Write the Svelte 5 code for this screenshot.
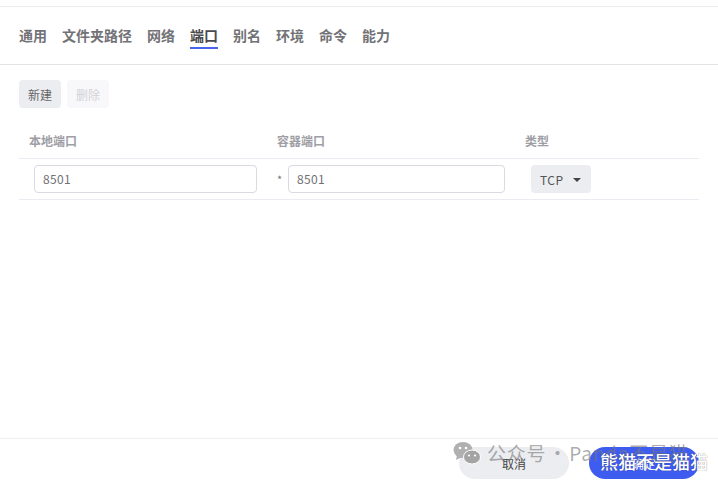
<script>
  const tabs = ['通用', '文件夹路径', '网络', '端口', '别名', '环境', '命令', '能力'];
</script>

<div class="page">
  <nav class="tabs">
    {#each tabs as t}
      <span class="tab" class:active={t === '端口'}>{t}</span>
    {/each}
  </nav>
  <main class="body">
    <div class="actions">
      <button class="btn">新建</button>
      <button class="btn off">删除</button>
    </div>
    <div class="row head">
      <div class="c1">本地端口</div>
      <div class="c2">容器端口</div>
      <div class="c3">类型</div>
    </div>
    <div class="row data">
      <div class="c1"><div class="input">8501</div></div>
      <div class="c2"><span class="star">*</span><div class="input">8501</div></div>
      <div class="c3">
        <div class="select">TCP
          <svg width="8" height="4" viewBox="0 0 8 4"><path d="M0 0h8L4 4z" fill="#444"/></svg>
        </div>
      </div>
    </div>
  </main>
  <footer class="foot">
    <button class="pill cancel">取消</button>
    <button class="pill ok">确定</button>
    <div class="mark">
      <svg width="28" height="24" viewBox="0 0 28 24">
        <ellipse cx="10" cy="9" rx="9.500" ry="8" fill="#b0b0b0"/>
        <path d="M4 14l-1 5 6-3z" fill="#b0b0b0"/>
        <ellipse cx="19" cy="16" rx="8.500" ry="7" fill="#a4a4a4" stroke="#fff" stroke-width="1"/>
        <circle cx="7" cy="7" r="1.300" fill="#fff"/><circle cx="13" cy="7" r="1.300" fill="#fff"/>
        <circle cx="16" cy="14.500" r="1.100" fill="#fff"/><circle cx="22" cy="14.500" r="1.100" fill="#fff"/>
      </svg>
      <span class="mtext">公众号 · Panda不是猫</span>
    </div>
    <div class="name">熊猫不是猫猫</div>
  </footer>
</div>

<style>
  :global(body) { margin: 0; background: #fff; }
  .page {
    width: 718px; height: 483px; position: relative; overflow: hidden;
    display: flex; flex-direction: column; box-sizing: border-box;
    padding-top: 6px;
    font-family: "Noto Sans CJK SC", "Noto Sans", sans-serif;
    color: #333;
  }
  .tabs {
    display: flex; gap: 15px; height: 59px; box-sizing: border-box;
    padding: 16px 19px 0;
    border-top: 1px solid #ebebed; border-bottom: 1px solid #e3e3e6;
    font-size: 14px; font-weight: 700; color: #727276;
  }
  .tab { height: 26px; line-height: 24px; box-sizing: border-box; }
  .active { color: #4a4a4e; border-bottom: 2px solid #4a63ee; }
  .body { flex: 1; padding: 15px 19px 0; }
  .actions { display: flex; gap: 6px; }
  .btn {
    width: 42px; height: 28px; border: 0; border-radius: 4px; padding: 0;
    background: #ecedf1; color: #666; font: inherit; font-size: 12px;
  }
  .off { background: #f8f8fa; color: #d2d2d7; }
  .row { display: flex; width: 680px; box-sizing: border-box; border-bottom: 1px solid #ebecf2; }
  .head { height: 36px; margin-top: 15px; align-items: center; font-size: 12px; font-weight: 700; color: #9e9ea4; }
  .head .c1 { padding-left: 10px; }
  .data { height: 41px; align-items: center; }
  .c1 { width: 258px; box-sizing: border-box; }
  .c2 { width: 248px; box-sizing: border-box; display: flex; align-items: center; }
  .data .c1 { padding: 0 20px 0 15px; }
  .data .c2 { padding-right: 20px; }
  .data .c3 { padding-left: 6px; }
  .star { width: 11px; font-size: 11px; color: #777; flex: none; }
  .input {
    flex: 1; height: 28px; line-height: 26px; box-sizing: border-box;
    border: 1px solid #d9dae2; border-radius: 4px; padding: 0 8px;
    font-size: 12px; letter-spacing: 0.3px; color: #707074;
  }
  .select {
    width: 60px; height: 28px; border-radius: 4px; background: #ecedf1;
    display: flex; align-items: center; gap: 9px; padding: 1px 0 0 9px; box-sizing: border-box;
    font-size: 12px; letter-spacing: 0.5px; color: #555;
  }
  .foot { height: 45px; flex: none; border-top: 1px solid #efeff1; position: relative; display: flex; justify-content: flex-end; gap: 20px; padding: 8px 19px 0; box-sizing: border-box; }
  .pill { height: 32px; border: 0; border-radius: 16px; font: inherit; font-size: 12px; padding: 0; color: #444; }
  .cancel { width: 110px; background: #ecedf1; }
  .ok { width: 110px; background: #3f5cf0; color: #fff; }
  .mark { position: absolute; left: 453px; top: 0; display: flex; align-items: center; gap: 6px; color: rgba(120,120,120,.62); font-size: 19px; white-space: nowrap; }
  .mtext { letter-spacing: 0.8px; word-spacing: -3.5px; }
  .name { position: absolute; left: 600px; top: 9px; color: #fff; font-size: 18px; font-weight: 500; white-space: nowrap; text-shadow: 0 0 1px rgba(0,0,0,.55); }
</style>
